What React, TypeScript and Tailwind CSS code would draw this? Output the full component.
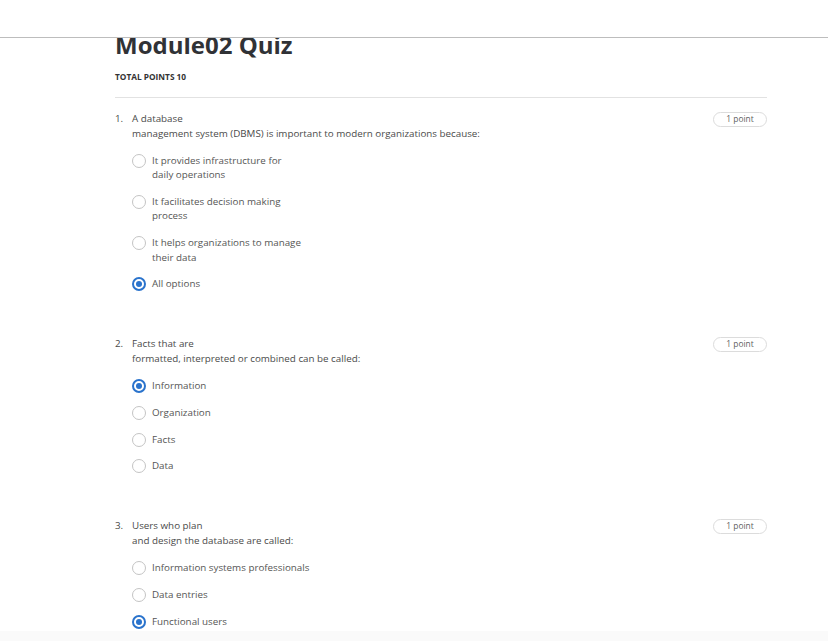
import { useState } from "react";

type Question = {
  id: number;
  lines: [string, string];
  options: string[][];
  selected: number;
};

const questions: Question[] = [
  {
    id: 1,
    lines: ["A database", "management system (DBMS) is important to modern organizations because:"],
    options: [
      ["It provides infrastructure for", "daily operations"],
      ["It facilitates decision making", "process"],
      ["It helps organizations to manage", "their data"],
      ["All options"],
    ],
    selected: 3,
  },
  {
    id: 2,
    lines: ["Facts that are", "formatted, interpreted or combined can be called:"],
    options: [["Information"], ["Organization"], ["Facts"], ["Data"]],
    selected: 0,
  },
  {
    id: 3,
    lines: ["Users who plan", "and design the database are called:"],
    options: [["Information systems professionals"], ["Data entries"], ["Functional users"]],
    selected: 2,
  },
];

function Radio({ checked }: { checked: boolean }) {
  return checked ? (
    <span className="flex h-[14px] w-[14px] shrink-0 items-center justify-center rounded-full border-2 border-[#2a73cc]">
      <span className="h-[6px] w-[6px] rounded-full bg-[#2a73cc]" />
    </span>
  ) : (
    <span className="h-[14px] w-[14px] shrink-0 rounded-full border-[1.5px] border-[#c4c4c4]" />
  );
}

function QuestionBlock({ q }: { q: Question }) {
  const [selected, setSelected] = useState(q.selected);
  return (
    <div className="mb-[38.5px]">
      <div className="flex items-start">
        <span className="w-[17px] shrink-0 leading-[15px] text-[#4a4a4a]">{q.id}.</span>
        <div className="flex-1 leading-[15px] text-[#4a4a4a]">
          <div>{q.lines[0]}</div>
          <div>{q.lines[1]}</div>
        </div>
        <span className="mt-[0.5px] flex h-[15px] w-[54px] items-center justify-center rounded-full border border-[#dcdcdc] text-[8.4px] text-[#5f5f5f]">
          1 point
        </span>
      </div>
      <div className="mt-[6.7px] pl-[17px]">
        {q.options.map((opt, i) => (
          <button
            type="button"
            key={i}
            onClick={() => setSelected(i)}
            className="flex w-full items-start gap-[6px] py-[6.1px] text-left"
          >
            <Radio checked={selected === i} />
            <span className="leading-[14.5px] text-[#555]">
              {opt.map((l, j) => (
                <div key={j}>{l}</div>
              ))}
            </span>
          </button>
        ))}
      </div>
    </div>
  );
}

export default function App() {
  return (
    <div className="flex h-screen flex-col bg-white font-['Open_Sans',sans-serif] text-[9.8px]">
      <header className="relative z-10 h-[38px] shrink-0 border-b border-[#bdbdbd] bg-white" />
      <main className="min-h-0 flex-1 overflow-hidden">
        <div className="ml-[115px] w-[652px]">
          <h1 className="-mt-[8px] text-[24px] font-bold leading-[30px] text-[#303236]">Module02 Quiz</h1>
          <div className="mt-[11px] text-[8.3px] font-bold leading-[12px] text-[#333]">TOTAL POINTS 10</div>
          <div className="mt-[14px] border-t border-[#e2e2e2]" />
          <div className="pt-[13px]">
            {questions.map((q) => (
              <QuestionBlock key={q.id} q={q} />
            ))}
          </div>
        </div>
      </main>
      <footer className="h-[10px] shrink-0 bg-[#fafafa]" />
    </div>
  );
}
